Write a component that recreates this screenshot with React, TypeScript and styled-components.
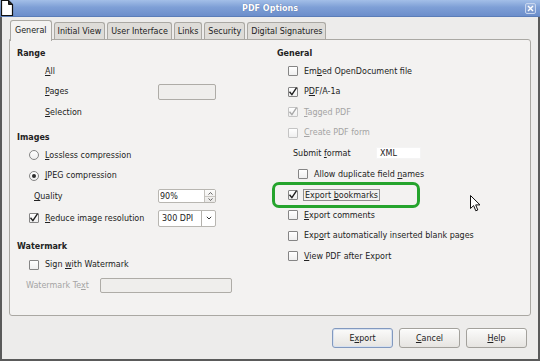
import React from "react"
import styled, { createGlobalStyle } from "styled-components"

const GlobalStyle = createGlobalStyle`
  html, body {
    margin: 0;
    padding: 0;
    background: #edeceb;
  }
  body {
    font-family: "DejaVu Sans", "Liberation Sans", sans-serif;
    font-size: 8px;
    color: #222;
  }
`

const Window = styled.div`
  position: relative;
  width: 540px;
  height: 361px;
  display: flex;
  flex-direction: column;
  overflow: hidden;
  background: #edeceb;
`

const TitleBar = styled.div`
  flex: none;
  height: 17px;
  box-sizing: border-box;
  display: grid;
  grid-template-columns: 40px 1fr 40px;
  align-items: center;
  background: linear-gradient(to bottom, #a3bfe8 0%, #7e9fd6 45%, #6c8ecb 100%);
  border-bottom: 1px solid #5b7db8;
`

const Title = styled.div`
  text-align: center;
  color: #fff;
  font-weight: bold;
  font-size: 8px;
  text-shadow: 0 0 1px rgba(40, 60, 110, 0.6);
`

const CloseBox = styled.div`
  justify-self: end;
  margin-right: 4px;
  width: 11px;
  height: 11px;
  box-sizing: border-box;
  border: 1px solid #c7d5ee;
  border-radius: 2px;
  background: linear-gradient(#9cb6e0, #7795cc);
  display: flex;
  align-items: center;
  justify-content: center;
`

const Body = styled.div`
  flex: 1;
  display: flex;
  flex-direction: column;
  border: 2px solid #5a5a5a;
  border-top: none;
  padding: 3px 7px 0 7px;
`

const TabStrip = styled.div`
  display: flex;
  align-items: flex-end;
  height: 20px;
  gap: 2px;
  padding-left: 1px;
`

const Tab = styled.div<{ $active?: boolean }>`
  position: relative;
  z-index: ${p => (p.$active ? 2 : 1)};
  box-sizing: border-box;
  height: ${p => (p.$active ? 21 : 17)}px;
  margin-bottom: ${p => (p.$active ? -1 : 1)}px;
  padding: ${p => (p.$active ? "0 4px 2px" : "0 3px")};
  display: flex;
  align-items: center;
  border: 1px solid #aaa8a3;
  border-bottom: none;
  border-radius: 3px 3px 0 0;
  background: ${p => (p.$active ? "#f3f2f1" : "#dedcd8")};
  white-space: nowrap;
`

const Panel = styled.div`
  margin-top: -1px;
  height: 277px;
  box-sizing: border-box;
  border: 1px solid #aaa8a3;
  border-radius: 0 3px 3px 3px;
  background: #f3f2f1;
  display: grid;
  grid-template-columns: 260px 1fr;
`

const Column = styled.div`
  position: relative;
  display: flex;
  flex-direction: column;
  padding: 5px 0 0 7px;
`

const Header = styled.div<{ $mt?: number }>`
  height: 16px;
  margin-top: ${p => p.$mt ?? 0}px;
  display: flex;
  align-items: center;
  font-weight: bold;
`

const Row = styled.div<{ $indent: number; $mt?: number; $h?: number }>`
  position: relative;
  height: ${p => p.$h ?? 20.5}px;
  margin-top: ${p => p.$mt ?? 0}px;
  padding-left: ${p => p.$indent}px;
  display: flex;
  align-items: center;
  white-space: nowrap;
`

const Label = styled.span<{ $w?: number; $off?: boolean }>`
  display: inline-block;
  flex: none;
  width: ${p => (p.$w ? `${p.$w}px` : "auto")};
  color: ${p => (p.$off ? "#a4a4a4" : "inherit")};
`

const Focus = styled.span`
  margin-left: -1px;
  padding: 1px 1px 0;
  border: 1px solid #8e8e8e;
`

const Box = styled.span<{ $off?: boolean }>`
  flex: none;
  width: 10px;
  height: 10px;
  margin-right: 6px;
  box-sizing: border-box;
  border: 1px solid ${p => (p.$off ? "#c4c4c4" : "#858585")};
  border-radius: 1px;
  background: linear-gradient(#ffffff, #efefef);
  display: flex;
  align-items: center;
  justify-content: center;
  overflow: visible;
`

const Radio = styled(Box)`
  border-radius: 50%;
`

const Dot = styled.span`
  width: 4px;
  height: 4px;
  border-radius: 50%;
  background: #2c2c2c;
`

const Field = styled.div<{ $w: number; $h: number; $white?: boolean }>`
  flex: none;
  width: ${p => p.$w}px;
  height: ${p => p.$h}px;
  box-sizing: border-box;
  border: 1px solid ${p => (p.$white ? "#b8b6b1" : "#aeaca7")};
  border-radius: 2px;
  background: ${p => (p.$white ? "#ffffff" : "#efeeec")};
  display: flex;
  align-items: stretch;
`

const FieldText = styled.span<{ $pad?: number }>`
  flex: 1;
  display: flex;
  align-items: center;
  padding-left: ${p => p.$pad ?? 1}px;
`

const Spin = styled.span`
  width: 10px;
  border-left: 1px solid #c3c1bc;
  display: flex;
  flex-direction: column;
  background: linear-gradient(#fbfbfa, #e9e8e6);
`

const SpinHalf = styled.span<{ $top?: boolean }>`
  flex: 1;
  display: flex;
  align-items: center;
  justify-content: center;
  border-bottom: ${p => (p.$top ? "1px solid #c9c7c2" : "none")};
`

const ComboButton = styled.span`
  width: 13px;
  border-left: 1px solid #b3b1ac;
  display: flex;
  align-items: center;
  justify-content: center;
`

const XmlBox = styled.span`
  width: 45px;
  height: 12px;
  background: #fff;
  border: 1px solid #f4f4f4;
  box-sizing: border-box;
  display: flex;
  align-items: center;
  padding-left: 3px;
`

const Highlight = styled.div`
  position: absolute;
  left: -5px;
  top: -3px;
  width: 148px;
  height: 26px;
  box-sizing: border-box;
  border: 3px solid #25a42d;
  border-radius: 7px;
  pointer-events: none;
`

const ButtonRow = styled.div`
  display: flex;
  justify-content: flex-end;
  gap: 6px;
  margin-top: 12px;
  padding-right: 4px;
`

const Button = styled.div<{ $focus?: boolean }>`
  width: 61px;
  height: 20px;
  box-sizing: border-box;
  display: flex;
  align-items: center;
  justify-content: center;
  border: 1px solid ${p => (p.$focus ? "#8299bf" : "#a3a19c")};
  border-radius: 3px;
  background: linear-gradient(#fbfbfa, #e6e4e1);
  box-shadow: ${p => (p.$focus ? "inset 0 0 0 1px #d7e1f0" : "inset 0 1px 0 #ffffff")};
`

const Cursor = styled.svg`
  position: absolute;
  left: 470px;
  top: 195px;
`

const Check = ({ off }: { off?: boolean }) => (
  <svg width="10" height="10" viewBox="0 0 10 10" style={{ overflow: "visible" }}>
    <path
      d="M1.5 4.8 L3.9 7.6 L8.6 0.6"
      fill="none"
      stroke={off ? "#a8a8a8" : "#1e1e1e"}
      strokeWidth="1.4"
    />
  </svg>
)

const Checkbox = ({ checked, off }: { checked?: boolean; off?: boolean }) => (
  <Box $off={off}>{checked && <Check off={off} />}</Box>
)

export default function App() {
  return (
    <>
      <GlobalStyle />
      <Window>
        <TitleBar>
          <svg width="14" height="16" viewBox="0 0 14 16">
            <path d="M1.5 0.5 H8.5 L12.5 4.5 V15.5 H1.5 Z" fill="#fff" stroke="#111" strokeWidth="1.2" />
            <path d="M8.5 0.5 V4.5 H12.5" fill="#222" stroke="#111" strokeWidth="1" />
          </svg>
          <Title>PDF Options</Title>
          <CloseBox>
            <svg width="7" height="7" viewBox="0 0 7 7">
              <path d="M1 1 L6 6 M6 1 L1 6" stroke="#fff" strokeWidth="1.4" />
            </svg>
          </CloseBox>
        </TitleBar>

        <Body>
          <TabStrip>
            <Tab $active>General</Tab>
            <Tab>Initial View</Tab>
            <Tab>User Interface</Tab>
            <Tab>Links</Tab>
            <Tab>Security</Tab>
            <Tab>Digital Signatures</Tab>
          </TabStrip>

          <Panel>
            <Column>
              <Header>Range</Header>
              <Row $indent={28}>
                <Label><u>A</u>ll</Label>
              </Row>
              <Row $indent={28}>
                <Label $w={113}><u>P</u>ages</Label>
                <Field $w={58} $h={16} />
              </Row>
              <Row $indent={28}>
                <Label><u>S</u>election</Label>
              </Row>

              <Header $mt={6.5}>Images</Header>
              <Row $indent={12}>
                <Radio />
                <Label><u>L</u>ossless compression</Label>
              </Row>
              <Row $indent={12}>
                <Radio><Dot /></Radio>
                <Label><u>J</u>PEG compression</Label>
              </Row>
              <Row $indent={17}>
                <Label $w={124}><u>Q</u>uality</Label>
                <Field $w={58} $h={14} $white>
                  <FieldText>90%</FieldText>
                  <Spin>
                    <SpinHalf $top>
                      <svg width="5" height="3" viewBox="0 0 5 3"><path d="M0.5 2.6 L2.5 0.5 L4.5 2.6" fill="none" stroke="#555" strokeWidth="0.9" /></svg>
                    </SpinHalf>
                    <SpinHalf>
                      <svg width="5" height="3" viewBox="0 0 5 3"><path d="M0.5 0.4 L2.5 2.5 L4.5 0.4" fill="none" stroke="#555" strokeWidth="0.9" /></svg>
                    </SpinHalf>
                  </Spin>
                </Field>
              </Row>
              <Row $indent={12} $mt={1} $h={21}>
                <Checkbox checked />
                <Label $w={113}><u>R</u>educe image resolution</Label>
                <Field $w={58} $h={17} $white>
                  <FieldText $pad={3}>300 DPI</FieldText>
                  <ComboButton>
                    <svg width="6" height="4" viewBox="0 0 6 4"><path d="M0.8 0.8 L3 3 L5.2 0.8" fill="none" stroke="#333" strokeWidth="1" /></svg>
                  </ComboButton>
                </Field>
              </Row>

              <Header $mt={10}>Watermark</Header>
              <Row $indent={12}>
                <Checkbox />
                <Label>Sign <u>w</u>ith Watermark</Label>
              </Row>
              <Row $indent={9}>
                <Label $w={74} $off>Watermark Te<u>x</u>t</Label>
                <Field $w={132} $h={15} />
              </Row>
            </Column>

            <Column>
              <Header>General</Header>
              <Row $indent={11}>
                <Checkbox />
                <Label>Em<u>b</u>ed OpenDocument file</Label>
              </Row>
              <Row $indent={11}>
                <Checkbox checked />
                <Label>P<u>D</u>F/A-1a</Label>
              </Row>
              <Row $indent={11}>
                <Checkbox checked off />
                <Label $off><u>T</u>agged PDF</Label>
              </Row>
              <Row $indent={11}>
                <Checkbox off />
                <Label $off><u>C</u>reate PDF form</Label>
              </Row>
              <Row $indent={16}>
                <Label $w={83}>Submit <u>f</u>ormat</Label>
                <XmlBox>XML</XmlBox>
              </Row>
              <Row $indent={21} $mt={0.5}>
                <Checkbox />
                <Label>Allow duplicate field <u>n</u>ames</Label>
              </Row>
              <Row $indent={11}>
                <Checkbox checked />
                <Focus>Export <u>b</u>ookmarks</Focus>
                <Highlight />
              </Row>
              <Row $indent={11}>
                <Checkbox />
                <Label><u>E</u>xport comments</Label>
              </Row>
              <Row $indent={11}>
                <Checkbox />
                <Label>Exp<u>o</u>rt automatically inserted blank pages</Label>
              </Row>
              <Row $indent={11}>
                <Checkbox />
                <Label><u>V</u>iew PDF after Export</Label>
              </Row>
            </Column>
          </Panel>

          <ButtonRow>
            <Button $focus>E<u>x</u>port</Button>
            <Button><u>C</u>ancel</Button>
            <Button><u>H</u>elp</Button>
          </ButtonRow>
        </Body>

        <Cursor width="11" height="17" viewBox="0 0 11 17">
          <path d="M0.5 0.5 V13.5 L3.6 10.6 L5.8 15.8 L7.8 15 L5.7 9.9 H10 Z" fill="#fff" stroke="#111" strokeWidth="1" strokeLinejoin="round" />
        </Cursor>
      </Window>
    </>
  )
}
